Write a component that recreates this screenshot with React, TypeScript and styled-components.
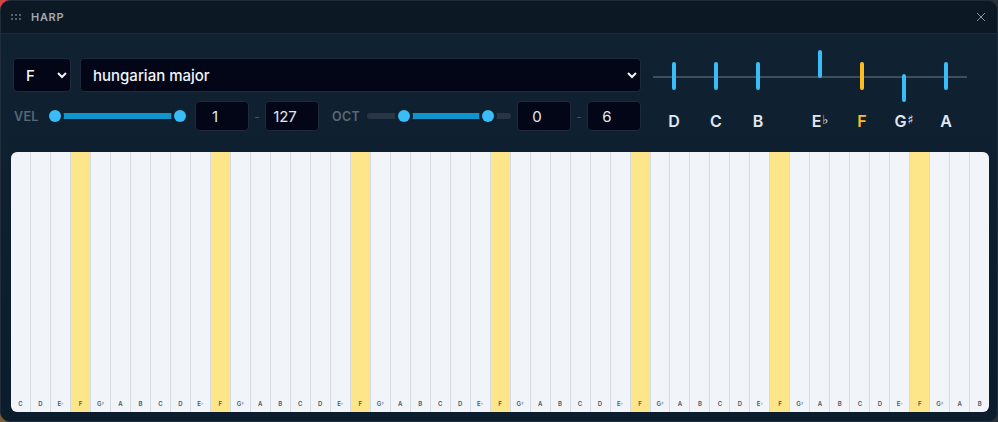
import React from 'react';
import styled, { createGlobalStyle } from 'styled-components';

const GlobalStyle = createGlobalStyle`
  html, body {
    margin: 0;
    padding: 0;
    background:
      linear-gradient(#d9443f, #d9443f) 0 0 / 14px 14px no-repeat,
      linear-gradient(#7a5f36, #7a5f36) 0 100% / 14px 14px no-repeat,
      #2b2f33;
  }
  body {
    font-family: Inter, "Liberation Sans", sans-serif;
    overflow: hidden;
  }
  * {
    box-sizing: border-box;
  }
`;

const NOTES = ['C', 'D', 'E♭', 'F', 'G♯', 'A', 'B'];
const keys = Array.from({ length: 49 }, (_, i) => NOTES[i % 7]);

const pedals = [
  { note: 'D', offset: 12, gapBefore: 0 },
  { note: 'C', offset: 12, gapBefore: 0 },
  { note: 'B', offset: 12, gapBefore: 0 },
  { note: 'E♭', offset: 0, gapBefore: 20 },
  { note: 'F', offset: 12, gapBefore: 0, active: true },
  { note: 'G♯', offset: 24, gapBefore: 0 },
  { note: 'A', offset: 12, gapBefore: 0 },
];

const NoteName = ({ note }: { note: string }) => (
  <>
    {note[0]}
    {note[1] && <Accidental>{note[1]}</Accidental>}
  </>
);

const App = () => {
  return (
    <>
      <GlobalStyle />
      <Window>
        <TitleBar>
          <TitleLeft>
            <Grip>
              {Array.from({ length: 6 }, (_, i) => (
                <GripDot key={i} />
              ))}
            </Grip>
            <Title>HARP</Title>
          </TitleLeft>
          <CloseButton>
            <svg width="10" height="10" viewBox="0 0 10 10" fill="none" stroke="#8b95a3" strokeWidth="1">
              <path d="M1 1l8 8M9 1l-8 8" />
            </svg>
          </CloseButton>
        </TitleBar>
        <Body>
          <Controls>
            <LeftControls>
              <SelectRow>
                <RootSelect defaultValue="F">
                  {NOTES.map((note) => (
                    <option key={note}>{note}</option>
                  ))}
                </RootSelect>
                <ScaleSelect defaultValue="hungarian major">
                  <option>hungarian major</option>
                  <option>harmonic minor</option>
                </ScaleSelect>
              </SelectRow>
              <RangeRow>
                <RangeLabel $width={37}>VEL</RangeLabel>
                <Slider $width={136}>
                  <Fill $from={5} $to={130} />
                  <Thumb $at={5} />
                  <Thumb $at={130} />
                </Slider>
                <NumberInput $ml={9} defaultValue="1" />
                <Dash>-</Dash>
                <NumberInput defaultValue="127" />
                <RangeLabel $width={36} $ml={12}>
                  OCT
                </RangeLabel>
                <Slider $width={144}>
                  <Fill $from={37} $to={121} />
                  <Thumb $at={37} />
                  <Thumb $at={121} />
                </Slider>
                <NumberInput $ml={6} defaultValue="0" />
                <Dash>-</Dash>
                <NumberInput defaultValue="6" />
              </RangeRow>
            </LeftControls>
            <PedalBoard>
              <PedalLine />
              {pedals.map((pedal) => (
                <Pedal key={pedal.note} $gapBefore={pedal.gapBefore}>
                  <PedalSlot>
                    <PedalBar $offset={pedal.offset} $active={pedal.active} />
                  </PedalSlot>
                  <PedalNote $active={pedal.active}>
                    <NoteName note={pedal.note} />
                  </PedalNote>
                </Pedal>
              ))}
            </PedalBoard>
          </Controls>
          <Keyboard>
            {keys.map((note, i) => (
              <Key key={i} $highlight={note === 'F'}>
                <KeyLabel>
                  <NoteName note={note} />
                </KeyLabel>
              </Key>
            ))}
          </Keyboard>
        </Body>
      </Window>
    </>
  );
};

export default App;

const Window = styled.div`
  width: 998px;
  height: 422px;
  display: flex;
  flex-direction: column;
  background-color: #0f1f2f;
  border: 1px solid #1f2d3d;
  border-radius: 10px;
  overflow: hidden;
`;

const TitleBar = styled.div`
  height: 33px;
  flex-shrink: 0;
  display: flex;
  align-items: center;
  justify-content: space-between;
  padding: 0 9px 0 10px;
  background-color: #0c1823;
  border-bottom: 1px solid #1c2b3a;
`;

const TitleLeft = styled.div`
  display: flex;
  align-items: center;
  gap: 10px;
`;

const Grip = styled.div`
  display: grid;
  grid-template-columns: repeat(3, 2px);
  gap: 2px;
`;

const GripDot = styled.span`
  width: 2px;
  height: 2px;
  background-color: #566270;
`;

const Title = styled.span`
  font-size: 11px;
  font-weight: 600;
  letter-spacing: 0.7px;
  color: #a0a8b4;
`;

const CloseButton = styled.div`
  width: 14px;
  height: 14px;
  display: flex;
  align-items: center;
  justify-content: center;
`;

const Body = styled.div`
  flex: 1;
  display: flex;
  flex-direction: column;
  padding: 16px 8px 9px 10px;
  background: linear-gradient(180deg, #102232 0%, #0b1c2c 100%);
`;

const Controls = styled.div`
  height: 102px;
  display: flex;
  padding-left: 2px;
`;

const LeftControls = styled.div`
  width: 628px;
  padding-top: 8px;
  display: flex;
  flex-direction: column;
  gap: 9px;
`;

const SelectRow = styled.div`
  display: flex;
  gap: 9px;
`;

const BaseSelect = styled.select`
  height: 34px;
  color-scheme: dark;
  padding: 0 4px 0 8px;
  background-color: #020617;
  color: #f1f5f9;
  border: 1px solid #1e293b;
  border-radius: 4px;
  font-family: Inter, "Liberation Sans", sans-serif;
  font-size: 15px;
  font-weight: 500;
  outline: none;
`;

const RootSelect = styled(BaseSelect)`
  width: 58px;
`;

const ScaleSelect = styled(BaseSelect)`
  flex: 1;
`;

const RangeRow = styled.div`
  height: 30px;
  display: flex;
  align-items: center;
`;

const RangeLabel = styled.span<{ $width: number; $ml?: number }>`
  width: ${(props) => props.$width}px;
  margin-left: ${(props) => props.$ml ?? 0}px;
  padding-left: 1px;
  font-size: 12.5px;
  font-weight: 600;
  letter-spacing: 0.3px;
  color: #5b6876;
`;

const Slider = styled.div<{ $width: number }>`
  position: relative;
  width: ${(props) => props.$width}px;
  height: 6px;
  border-radius: 3px;
  background-color: #283544;
`;

const Fill = styled.div<{ $from: number; $to: number }>`
  position: absolute;
  top: 0;
  bottom: 0;
  left: ${(props) => props.$from}px;
  width: ${(props) => props.$to - props.$from}px;
  background-color: #0f95cb;
`;

const Thumb = styled.div<{ $at: number }>`
  position: absolute;
  top: -3px;
  left: ${(props) => props.$at - 6}px;
  width: 12px;
  height: 12px;
  border-radius: 50%;
  background-color: #38bdf8;
  box-shadow: 0 0 0 3px #0f2030;
`;

const NumberInput = styled.input<{ $ml?: number }>`
  width: 54px;
  height: 30px;
  margin-left: ${(props) => props.$ml ?? 0}px;
  padding: 0 14px 0 0;
  text-align: center;
  background-color: #020617;
  color: #e2e8f0;
  border: 1px solid #1e293b;
  border-radius: 4px;
  font-family: Inter, "Liberation Sans", sans-serif;
  font-size: 15px;
  outline: none;
`;

const Dash = styled.span`
  width: 16px;
  text-align: center;
  font-size: 12px;
  color: #475569;
`;

const PedalBoard = styled.div`
  position: relative;
  width: 314px;
  margin-left: 12px;
  display: flex;
`;

const PedalLine = styled.div`
  position: absolute;
  top: 26px;
  left: 0;
  right: 0;
  height: 2px;
  background-color: #3f4d5c;
`;

const Pedal = styled.div<{ $gapBefore: number }>`
  position: relative;
  width: 42px;
  margin-left: ${(props) => props.$gapBefore}px;
  display: flex;
  flex-direction: column;
  align-items: center;
`;

const PedalSlot = styled.div`
  height: 52px;
  display: flex;
  flex-direction: column;
`;

const PedalBar = styled.div<{ $offset: number; $active?: boolean }>`
  width: 4px;
  height: 28px;
  margin-top: ${(props) => props.$offset}px;
  border-radius: 2px;
  background-color: ${(props) => (props.$active ? '#fbbf24' : '#38bdf8')};
`;

const PedalNote = styled.div<{ $active?: boolean }>`
  margin-top: 9px;
  height: 20px;
  line-height: 20px;
  white-space: nowrap;
  font-size: 16px;
  font-weight: 600;
  color: ${(props) => (props.$active ? '#fbbf24' : '#e2e8f0')};
`;

const Accidental = styled.span`
  display: inline-block;
  line-height: 1;
  margin-left: 0.05em;
  font-family: "DejaVu Sans", sans-serif;
  font-size: 0.8em;
  font-weight: 700;
  vertical-align: 0.2em;
`;

const Keyboard = styled.div`
  flex: 1;
  display: flex;
  border-radius: 6px;
  overflow: hidden;
`;

const Key = styled.div<{ $highlight: boolean }>`
  flex: 1;
  display: flex;
  align-items: flex-end;
  justify-content: center;
  padding-bottom: 4px;
  background-color: ${(props) => (props.$highlight ? '#fde68a' : '#f1f5f9')};
  border-right: 1px solid #d5dae3;

  &:last-child {
    border-right: none;
  }
`;

const KeyLabel = styled.span`
  height: 8px;
  line-height: 8px;
  white-space: nowrap;
  font-size: 6px;
  font-weight: 600;
  color: #475569;
`;
